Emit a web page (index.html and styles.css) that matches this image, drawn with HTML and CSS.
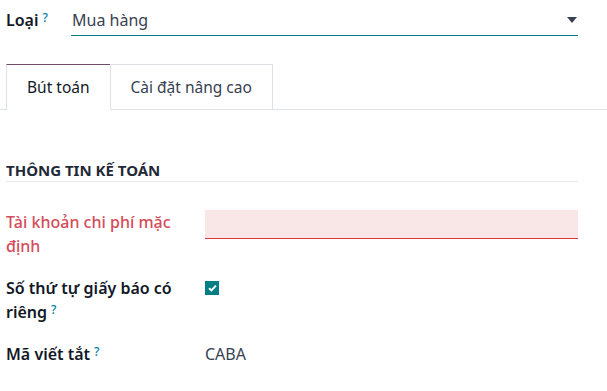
FILE: index.html
```html
<!DOCTYPE html>
<html lang="vi">

<head>
    <meta charset="UTF-8">
    <meta name="viewport" content="width=device-width, initial-scale=1.0">
    <title>Sổ nhật ký</title>
    <link rel="stylesheet" href="styles.css">
</head>

<body>
    <div class="top-row">
        <label class="top-label">Loại<sup class="help">?</sup></label>
        <div class="select-box">
            <span>Mua hàng</span>
            <span class="caret"></span>
        </div>
    </div>

    <div class="tabs">
        <div class="tab active">Bút toán</div>
        <div class="tab">Cài đặt nâng cao</div>
    </div>

    <div class="sheet">
        <div class="group-title">Thông tin kế toán</div>

        <div class="field-row first">
            <label class="field-label required">Tài khoản chi phí mặc định</label>
            <div class="field-value">
                <div class="input-invalid"></div>
            </div>
        </div>

        <div class="field-row">
            <label class="field-label">Số thứ tự giấy báo có riêng<sup class="help">?</sup></label>
            <div class="field-value">
                <span class="check">
                    <svg width="9" height="8" viewBox="0 0 9 8">
                        <path d="M1 4.2 L3.4 6.4 L8 1.6" fill="none" stroke="#fff" stroke-width="2" />
                    </svg>
                </span>
            </div>
        </div>

        <div class="field-row">
            <label class="field-label">Mã viết tắt<sup class="help">?</sup></label>
            <div class="field-value text">CABA</div>
        </div>
    </div>
</body>

</html>
```

FILE: styles.css
```css
* {
    margin: 0;
    padding: 0;
    box-sizing: border-box;
}

body {
    font-family: "Noto Sans", "Open Sans", sans-serif;
    font-size: 16px;
    color: #212529;
    background: #fff;
}

.help {
    color: #0180a5;
    font-size: 12px;
    font-weight: 500;
    margin-left: 4px;
    vertical-align: 4px;
    line-height: 0;
}

.top-row {
    display: flex;
    align-items: flex-end;
    padding: 5px 29px 0 6px;
}

.top-label {
    width: 65px;
    font-weight: 600;
    color: #111827;
    line-height: 24px;
    align-self: flex-start;
    padding-top: 3px;
}

.select-box {
    flex: 1;
    display: flex;
    justify-content: space-between;
    align-items: center;
    height: 31px;
    padding-left: 1px;
    border-bottom: 1px solid #017e84;
    color: #374151;
}

.caret {
    width: 0;
    height: 0;
    border-left: 5px solid transparent;
    border-right: 5px solid transparent;
    border-top: 6px solid #374151;
    margin-right: 1px;
}

.tabs {
    display: flex;
    margin-top: 28px;
    padding-left: 6px;
    border-bottom: 1px solid #dee2e6;
}

.tab {
    padding: 0 20px;
    height: 45px;
    line-height: 44px;
    font-size: 15.5px;
    border: 1px solid #dee2e6;
    border-bottom: none;
    margin-bottom: -1px;
    color: #374151;
    background: #fff;
}

.tab.active {
    border-top-color: #714b67;
    border-right: none;
    color: #111827;
    height: 46px;
}

.sheet {
    padding: 0 29px 0 6px;
}

.group-title {
    margin-top: 50px;
    padding-bottom: 0;
    border-bottom: 1px solid #e5e7eb;
    font-size: 15px;
    font-weight: 700;
    text-transform: uppercase;
    color: #1f2937;
    line-height: 21px;
}

.field-row {
    display: flex;
    margin-top: 18px;
}

.field-row.first {
    margin-top: 28px;
}

.field-label {
    width: 199px;
    padding-right: 20px;
    line-height: 24px;
    font-weight: 600;
    color: #111827;
}

.field-label.required {
    color: #d44c59;
    font-weight: 500;
}

.field-value {
    flex: 1;
}

.input-invalid {
    height: 29px;
    background: #f9e7e8;
    border-bottom: 1px solid #dc3545;
}

.check {
    display: flex;
    align-items: center;
    justify-content: center;
    width: 14px;
    height: 14px;
    margin-top: 5px;
    background: #017e84;
}

.field-value.text {
    line-height: 24px;
    color: #374151;
}
```
